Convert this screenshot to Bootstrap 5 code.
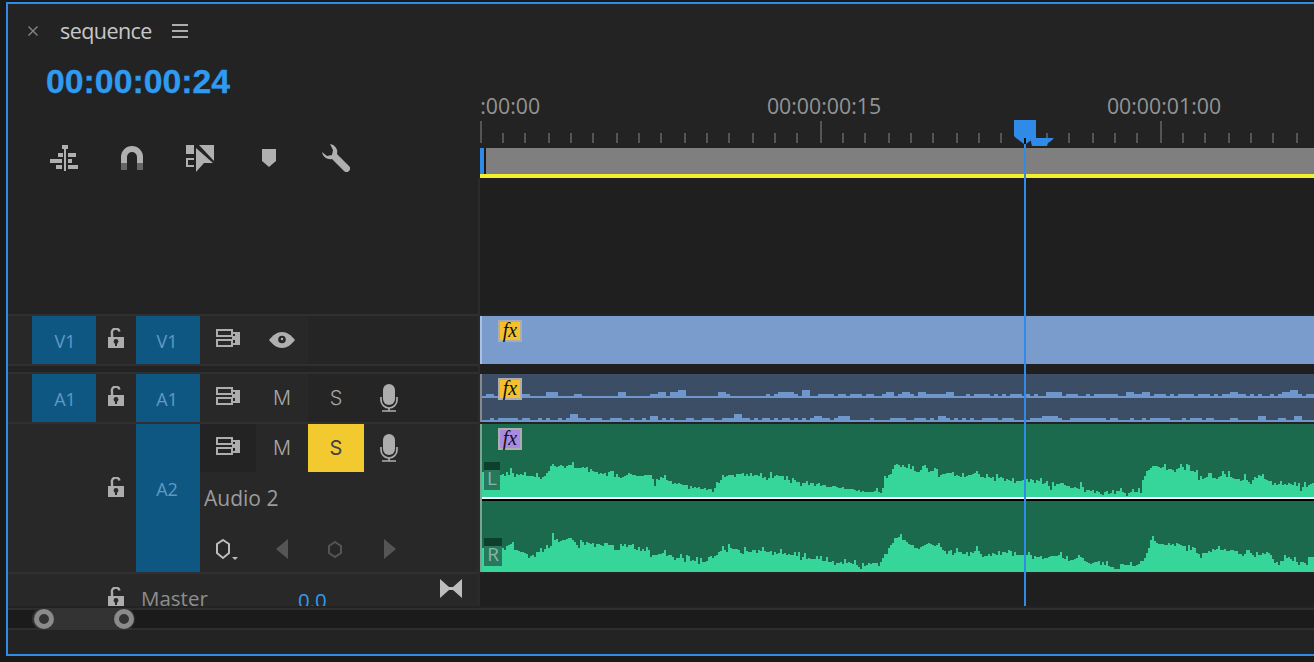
<!DOCTYPE html>
<html lang="en">
<head>
<meta charset="utf-8">
<title>sequence</title>
<link href="https://cdn.jsdelivr.net/npm/bootstrap@5.3.0/dist/css/bootstrap.min.css" rel="stylesheet">
<style>
html,body{height:100%;overflow:hidden}
body{background:#191919;font-family:"Open Sans",sans-serif;color:#aaa}
.pp-panel{margin:2px 0 0 6px;height:654px;border:2px solid #2f8ae8;border-right:0;background:#232323;width:1308px}
.pp-main{height:602px}
.pp-left{width:472px;flex:none}
.pp-right{width:834px;flex:none;background:#1f1f1f}
.pp-top{height:174px;flex:none}
.pp-tab{height:54px;padding-left:20px}
.pp-tabname{font-size:21.5px;font-weight:500;color:#c8c8c8;margin:0 20px 0 22px;letter-spacing:-.55px}
.pp-tc{height:46px;padding:1px 0 0 38px;font:bold 33.8px "Liberation Sans",sans-serif;color:#2f9bf0;-webkit-text-stroke:.3px #2f9bf0}
.pp-tools{height:40px;margin-top:34px;padding-left:22px}
.pp-tool{width:68px}
.pp-nudge{margin-left:2px}
.pp-ruler{height:174px;background:#232323;overflow:hidden}
.pp-ticks{position:absolute;left:0;top:0}
.pp-tl{position:absolute;top:88px;font-size:21.3px;line-height:28px;color:#949494;width:120px;text-align:center}
.pp-tl0{left:-57px}
.pp-tl1{left:284px}
.pp-tl2{left:624px}
.pp-empty{height:136px;flex:none}
.pp-hb{border-right:2px solid #2b2b2b}
.pp-line{height:2px;background:#303030;flex:none}
.pp-dline{height:2px;background:#232323;flex:none}
.pp-gap{height:10px;flex:none}
.pp-gapl{height:6px;flex:none}
.pp-h48{height:48px;flex:none}
.pp-trk{background:#282828}
.pp-pad{width:24px;flex:none}
.pp-sp{width:64px;flex:none}
.pp-tgt{width:64px;flex:none;background:#0f5783;color:#5f9ac4;font-size:18px;padding-top:3px}
.pp-tgta{padding-left:2px}
.pp-tgtb{padding-right:2px}
.pp-tgt2{padding-bottom:20px;padding-right:2px}
.pp-lock{width:40px;flex:none}
.pp-lock2{padding-bottom:22px}
.pp-b56{width:56px;flex:none}
.pp-b52{width:52px;flex:none}
.pp-b50{width:50px;flex:none}
.pp-dim{background:#252525}
.pp-dark{background:#232323}
.pp-glyph{font:300 20px/1 Inter,sans-serif;color:#a8a8a8}
.pp-solo{background:#f2ca30;color:#3f3f48;font-weight:400}
.pp-a2{height:148px;flex:none}
.pp-a2r{flex:1 1 0;min-width:0}
.pp-h50{height:50px}
.pp-aname{font-size:21px;color:#9c9c9c;padding:3px 0 0 4px}
.pp-kf{padding:4px 0 0 16px}
.pp-kfnav{margin-left:38px}
.pp-master{height:32px;flex:none;overflow:hidden}
.pp-mlock{margin-top:13px}
.pp-mname{font-size:20.5px;color:#8e8e8e;width:162px;padding-left:5px;line-height:48px;height:32px;flex:none}
.pp-mval{font-size:20.5px;color:#2f9bf0;width:142px;line-height:53px;height:32px;flex:none}
.pp-bf{margin-top:5px}
.pp-clip{position:relative;overflow:hidden}
.pp-v{background:#7a9ccc;border-left:2px solid #a9c2e2}
.pp-a1c{background:#3c4d66;border-left:2px solid #868b93}
.pp-a2c{height:148px;background:#1c6a4e;border-left:2px solid #79a595}
.pp-fx{position:absolute;left:16px;top:4px;width:24px;height:22px;border:2px solid #adadad;background:#f5c02c;color:#111;font:italic 20px/16px "Liberation Serif",serif;text-align:center}
.pp-fxp{background:#a98ae0}
.pp-ch{position:absolute;left:2px;width:16px;height:28px;background:#27785c;color:#86b8a6;font-size:19px;line-height:16px;text-align:center;border-top:8px solid #0d3f2c}
.pp-chl{top:38px}
.pp-chr{top:114px;width:18px}
.pp-sl{height:2px;flex:none}
.pp-w{background:#fff}
.pp-k{background:#000}
.pp-wave{display:block}
.pp-play{position:absolute;left:0;top:0;pointer-events:none}
.pp-scroll{height:22px;border-top:2px solid #2e2e2e;border-bottom:2px solid #2e2e2e;background:#1b1b1b;margin-top:2px;padding-left:24px}
.pp-thumb{width:103px;height:22px;margin-top:-2px;background:#333;border-radius:11px;padding:0 1px 0 2px}
.pp-ring{width:20px;height:20px;border:5px solid #8b8b8b;border-radius:50%}
svg{display:block}
</style>
</head>
<body>
<svg width="0" height="0" class="position-absolute">
<defs>
<symbol id="i-lock" viewBox="0 0 16 20"><path d="M4 10V5.500A3.800 3.800 0 0 1 11.500 3.500" fill="none" stroke="#adadad" stroke-width="2.400"/><path d="M0 9h16v11H0z" fill="#adadad"/><circle cx="8" cy="13.500" r="2.400" fill="#2a2a2a"/><rect x="7" y="14" width="2" height="4" fill="#2a2a2a"/></symbol>
<symbol id="i-out" viewBox="0 0 24 18"><path d="M1 1h15v6H1zM1 11h15v6H1z" fill="none" stroke="#adadad" stroke-width="2"/><path d="M16 3h8v13h-8v-2h3v-3h-3V9h0V7h3V5h-3z" fill="#adadad"/></symbol>
<symbol id="i-mic" viewBox="0 0 18 28"><rect x="3" y="0" width="12" height="21" rx="6" fill="#adadad"/><path d="M1 13v3a8 8 0 0 0 16 0v-3" fill="none" stroke="#adadad" stroke-width="1.700"/><path d="M9 24v3M2 27h14" stroke="#adadad" stroke-width="1.700" fill="none"/></symbol>
</defs>
</svg>
<div class="pp-panel d-flex flex-column">
  <div class="pp-main d-flex">
    <div class="pp-left d-flex flex-column">
      <div class="pp-top d-flex flex-column">
        <div class="pp-tab d-flex align-items-center">
          <svg width="10" height="10" viewBox="0 0 10 10"><path d="M.5.500l9 9M9.500.500l-9 9" stroke="#8a8a8a" stroke-width="1.300"/></svg>
          <span class="pp-tabname">sequence</span>
          <svg width="16" height="14" viewBox="0 0 16 14"><path d="M0 1h16M0 7h16M0 13h16" stroke="#adadad" stroke-width="2"/></svg>
        </div>
        <div class="pp-tc d-flex align-items-center">00:00:00:24</div>
        <div class="pp-tools d-flex align-items-center">
          <div class="pp-tool d-flex justify-content-center"><svg width="28" height="26" viewBox="50 144 28 26"><path d="M62 144h6v4h-2v22h-2v-22h-2zM58 152h5v4h-5zM68 152h8v4h-8zM50 158h12v4H50zM68 158h4v4h-4zM56 164h6v4h-6zM68 164h10v4H68z" fill="#b0b0b0"/></svg></div>
          <div class="pp-tool d-flex justify-content-center"><svg width="22" height="24" viewBox="121 146 22 24"><path d="M121 163v-6a11 11 0 0 1 22 0v6h-6v-6a5 5 0 0 0-10 0v6z" fill="#b0b0b0"/><path d="M121 163h6v7h-6zM137 163h6v7h-6z" fill="#666"/></svg></div>
          <div class="pp-tool d-flex justify-content-center"><svg width="28" height="27" viewBox="186 146 28 27"><path d="M186 146h8v9h-8zM186 159h8v2h-6v5h6v2h-8zM199 146h15v16z" fill="#b0b0b0"/><path d="M196 149l17 15h-9l-8 9z" fill="#b0b0b0"/></svg></div>
          <div class="pp-tool d-flex justify-content-center"><svg class="pp-nudge" width="14" height="18" viewBox="0 0 14 18"><path d="M0 0h14v12l-7 6-7-6z" fill="#b0b0b0"/></svg></div>
          <div class="pp-tool d-flex justify-content-center"><svg width="28" height="28" viewBox="322 144 28 28"><path d="M330 144a8 8 0 0 1 7 10l12 12a3.500 3.500 0 0 1-5 5l-12-12a8 8 0 0 1-10-7l5 4 5-1 1-5z" fill="#b0b0b0"/></svg></div>
        </div>
      </div>
      <div class="pp-empty pp-hb"></div>
      <div class="pp-line pp-hb"></div>
      <div class="pp-h48 d-flex pp-trk pp-hb">
        <div class="pp-pad"></div>
        <div class="pp-tgt pp-tgta d-flex align-items-center justify-content-center">V1</div>
        <div class="pp-lock d-flex align-items-center justify-content-center pb-1"><svg width="16" height="20"><use href="#i-lock"/></svg></div>
        <div class="pp-tgt pp-tgtb d-flex align-items-center justify-content-center">V1</div>
        <div class="pp-b56 d-flex align-items-center justify-content-center pb-1"><svg width="24" height="18"><use href="#i-out"/></svg></div>
        <div class="pp-b52 d-flex align-items-center justify-content-center"><svg width="26" height="16" viewBox="0 0 26 16"><path d="M0 8C4 3 8 0 13 0s9 3 13 8c-4 5-8 8-13 8S4 13 0 8z" fill="#b0b0b0"/><circle cx="13" cy="7.500" r="3.800" fill="#282828"/><circle cx="13" cy="7" r="1.200" fill="#b0b0b0"/></svg></div>
        <div class="flex-fill pp-dim"></div>
      </div>
      <div class="pp-line pp-hb"></div>
      <div class="pp-gapl pp-hb"></div>
      <div class="pp-line pp-hb"></div>
      <div class="pp-h48 d-flex pp-trk pp-hb">
        <div class="pp-pad"></div>
        <div class="pp-tgt pp-tgta d-flex align-items-center justify-content-center">A1</div>
        <div class="pp-lock d-flex align-items-center justify-content-center pb-1"><svg width="16" height="20"><use href="#i-lock"/></svg></div>
        <div class="pp-tgt pp-tgtb d-flex align-items-center justify-content-center">A1</div>
        <div class="pp-b56 d-flex align-items-center justify-content-center pb-1"><svg width="24" height="18"><use href="#i-out"/></svg></div>
        <div class="pp-b52 d-flex align-items-center justify-content-center pp-glyph">M</div>
        <div class="pp-b56 d-flex align-items-center justify-content-center pp-glyph pp-dim">S</div>
        <div class="pp-b50 d-flex align-items-center justify-content-center pp-dim"><svg width="18" height="28"><use href="#i-mic"/></svg></div>
        <div class="flex-fill pp-dim"></div>
      </div>
      <div class="pp-line pp-hb"></div>
      <div class="pp-a2 d-flex pp-trk pp-hb">
        <div class="pp-pad"></div>
        <div class="pp-sp"></div>
        <div class="pp-lock pp-lock2 d-flex align-items-center justify-content-center"><svg width="16" height="20"><use href="#i-lock"/></svg></div>
        <div class="pp-tgt pp-tgt2 d-flex align-items-center justify-content-center">A2</div>
        <div class="pp-a2r d-flex flex-column">
          <div class="pp-h48 d-flex">
            <div class="pp-b56 pp-dark d-flex align-items-center justify-content-center pb-1"><svg width="24" height="18"><use href="#i-out"/></svg></div>
            <div class="pp-b52 d-flex align-items-center justify-content-center pp-glyph">M</div>
            <div class="pp-b56 d-flex align-items-center justify-content-center pp-glyph pp-solo">S</div>
            <div class="pp-b50 d-flex align-items-center justify-content-center"><svg width="18" height="28"><use href="#i-mic"/></svg></div>
          </div>
          <div class="pp-h50 d-flex align-items-center pp-aname">Audio 2</div>
          <div class="pp-h50 d-flex align-items-center pp-kf">
            <svg width="22" height="21" viewBox="216 538 22 21"><path d="M223 539l6 4v9l-6 5-6-5v-9z" fill="none" stroke="#bdbdbd" stroke-width="2"/><path d="M232 556h6l-3 3z" fill="#bdbdbd"/></svg>
            <svg class="pp-kfnav" width="124" height="20" viewBox="276 539 124 20"><path d="M288 539v20l-12-10zM384 539v20l12-10z" fill="#555"/><path d="M335 542l6 4v7l-6 4-6-4v-7z" fill="none" stroke="#555" stroke-width="2"/></svg>
          </div>
        </div>
      </div>
      <div class="pp-line pp-hb"></div>
      <div class="pp-master d-flex pp-trk pp-hb">
        <div class="pp-pad"></div>
        <div class="pp-sp"></div>
        <div class="pp-lock d-flex justify-content-center"><svg class="pp-mlock" width="16" height="20"><use href="#i-lock"/></svg></div>
        <div class="pp-mname">Master</div>
        <div class="pp-mval">0.0</div>
        <svg class="pp-bf" width="22" height="19" viewBox="0 0 22 19"><path d="M0 0l9 8h4l9-8v19l-9-8H9l-9 8z" fill="#bdbdbd"/></svg>
      </div>
    </div>
    <div class="pp-right position-relative d-flex flex-column">
      <div class="pp-ruler position-relative">
        <svg id="ticks" class="pp-ticks" width="834" height="174" viewBox="480 4 834 174"></svg>
        <div class="pp-tl pp-tl0">00:00:00:00</div>
        <div class="pp-tl pp-tl1">00:00:00:15</div>
        <div class="pp-tl pp-tl2">00:00:01:00</div>
      </div>
      <div class="pp-empty"></div>
      <div class="pp-dline"></div>
      <div class="pp-h48 pp-clip pp-v"><div class="pp-fx">fx</div></div>
      <div class="pp-gap"></div>
      <div class="pp-h48 pp-clip pp-a1c">
        <svg id="wa1" class="pp-wave" width="832" height="48" viewBox="482 374 832 48"></svg>
        <div class="pp-fx">fx</div>
      </div>
      <div class="pp-dline"></div>
      <div class="pp-a2c pp-clip d-flex flex-column">
        <svg id="wl" class="pp-wave" width="832" height="73" viewBox="482 424 832 73"></svg>
        <div class="pp-sl pp-w"></div>
        <div class="pp-sl pp-k"></div>
        <svg id="wr" class="pp-wave" width="832" height="71" viewBox="482 501 832 71"></svg>
        <div class="pp-fx pp-fxp">fx</div>
        <div class="pp-ch pp-chl">L</div>
        <div class="pp-ch pp-chr">R</div>
      </div>
      <div class="pp-dline"></div>
      <svg class="pp-play" width="834" height="602" viewBox="480 4 834 602">
        <path d="M1014 120h22v18h-2l-8 6h-2l-8-6-2-2z" fill="#2f8ae8"/>
        <path d="M1030 138h24l-3 3-3 2-1 3h-15z" fill="#2f8ae8"/>
        <rect x="1024" y="138" width="2" height="6" fill="#111"/>
        <rect x="1024" y="144" width="2" height="462" fill="#2f8ae8"/>
      </svg>
    </div>
  </div>
  <div class="pp-scroll">
    <div class="pp-thumb d-flex align-items-center justify-content-between">
      <div class="pp-ring"></div>
      <div class="pp-ring"></div>
    </div>
  </div>
</div>
<script>
(function(){
  function h(n){var s=Math.sin(n*12.9898+4.1)*43758.5453;return s-Math.floor(s);}
  var t='';
  for(var i=0;i<=37;i++){
    var x=2*Math.floor((480+340/15*i)/2);
    var maj=i%15===0;
    t+='<rect x="'+x+'" y="'+(maj?121:133)+'" width="2" height="'+(maj?22:10)+'" fill="#555"/>';
  }
  t+='<rect x="480" y="148" width="834" height="26" fill="#7f7f7f"/>';
  t+='<rect x="484" y="148" width="2" height="26" fill="#1a1a1a"/>';
  t+='<rect x="480" y="148" width="4" height="26" fill="#2f8ae8"/>';
  t+='<rect x="480" y="174" width="834" height="4" fill="#f4ef30"/>';
  document.getElementById('ticks').innerHTML=t;

  var L=[482,472,500,474,510,472,517,475,530,476,541,478,545,475,551,464,555,467,566,465,570,465,577,468,585,467,595,472,603,474,610,471,620,478,627,473,640,476,650,475,655,485,660,477,670,482,677,484,690,486,702,489,707,490,715,488,720,480,727,475,737,474,745,473,750,477,757,475,763,478,773,475,777,480,787,480,793,479,800,483,810,482,817,484,827,486,837,488,850,489,860,492,883,492,884,480,890,473,893,465,898,465,907,468,917,472,927,468,933,472,940,475,953,472,960,477,970,475,977,470,983,478,993,478,1003,478,1013,482,1020,480,1030,479,1040,482,1050,487,1060,483,1070,488,1080,486,1085,490,1095,490,1100,493,1110,490,1117,491,1125,493,1140,492,1143,474,1150,468,1155,466,1170,470,1185,467,1195,472,1200,480,1207,477,1215,478,1225,473,1235,480,1243,477,1250,484,1257,474,1265,480,1280,485,1290,484,1300,488,1305,486,1314,482];
  var R=[480,548,503,548,510,544,515,550,523,552,530,556,548,548,552,537,558,542,570,538,577,545,585,542,597,544,610,542,617,551,625,543,637,551,647,547,650,557,660,553,677,558,690,560,702,562,710,560,718,552,728,548,737,550,750,552,757,550,767,552,773,552,783,554,797,556,807,558,817,560,830,562,840,563,853,563,860,568,867,564,880,563,883,555,888,548,893,540,898,537,907,543,917,548,927,543,940,548,947,555,957,552,967,553,977,550,983,558,990,553,1000,555,1003,552,1013,556,1023,555,1033,556,1043,558,1058,555,1067,561,1082,558,1090,565,1097,560,1110,567,1123,565,1133,567,1143,560,1147,550,1152,540,1160,545,1177,543,1187,548,1200,555,1213,550,1233,550,1240,555,1247,548,1253,557,1267,553,1277,563,1287,557,1297,562,1307,562,1314,553];
  function at(p,x){
    for(var i=0;i<p.length-2;i+=2){
      if(x<=p[i+2]){var f=Math.max(0,(x-p[i])/(p[i+2]-p[i]));return p[i+1]+(p[i+3]-p[i+1])*f;}
    }
    return p[p.length-1];
  }
  function wave(p,base,seed){
    var d='M482 '+base, x;
    for(x=482;x<1314;x+=2){
      var r=h(x+seed), y=at(p,x);
      if(r>.88)y-=4;else if(r<.1)y+=3;else y+=Math.round((r-.5)*2);
      d+='V'+Math.round(y)+'H'+(x+2);
    }
    return '<path d="'+d+'V'+base+'z" fill="#36d69a"/>';
  }
  document.getElementById('wl').innerHTML=wave(L,497,0);
  document.getElementById('wr').innerHTML=wave(R,572,500);

  function bumps(base,seed,sparse){
    var s='';
    for(var x=482;x<1314;x+=4){
      var r=h(x*.37+seed);
      var th=(sparse&&x<760)?.8:.45;
      if(r>th){
        var hh=r>.985?6:r>.9?4:2;
        s+='<rect x="'+x+'" y="'+(base-hh)+'" width="'+(r>.8?8:4)+'" height="'+hh+'" fill="#6f97cc"/>';
      }
    }
    return s+'<rect x="482" y="'+base+'" width="832" height="2" fill="#6f97cc"/>';
  }
  document.getElementById('wa1').innerHTML=bumps(396,11,true)+bumps(420,77,false);
})();
</script>
</body>
</html>
